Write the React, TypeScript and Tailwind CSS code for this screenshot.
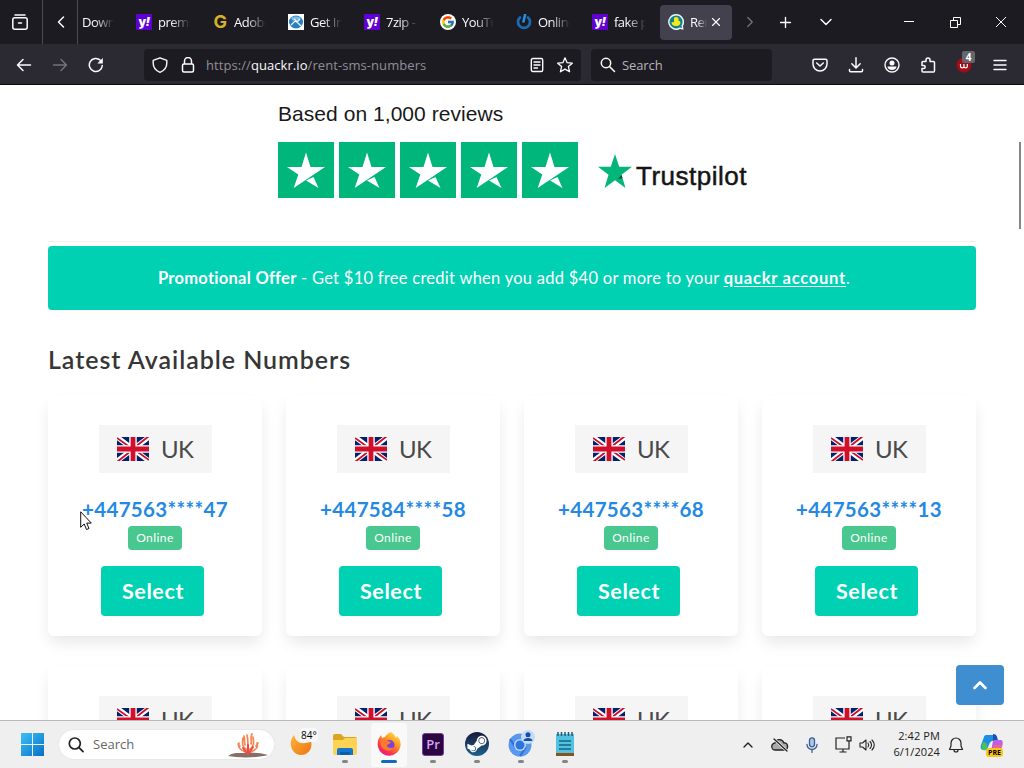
import React from 'react';
import { ChevronDown, ChevronLeft, ChevronRight, ChevronUp, Plus, X } from 'lucide-react';
import { FcGoogle } from 'react-icons/fc';
import { FaSteamSymbol } from 'react-icons/fa';

const YahooIcon = () => (
  <span className="flex h-4 w-4 shrink-0 items-center justify-center bg-[#5f01d1] pb-px font-['Inter'] text-[12px] leading-none font-black tracking-[-0.5px] text-white">
    y<i>!</i>
  </span>
);

const GoldIcon = () => (
  <span className="flex h-4 w-4 shrink-0 items-center justify-center font-['Inter'] text-[18px] leading-none font-bold text-[#d5b02b]">G</span>
);

const InfoIcon = () => (
  <svg className="h-4 w-4 shrink-0" viewBox="0 0 16 16">
    <path fill="#fff" d="M0 0h16v16H0z" />
    <ellipse cx="8" cy="8" rx="7" ry="6.5" fill="#2b7fc0" />
    <path d="M3 4c2-2 8-2 10 0l-2 3-3-2-3 2z" fill="#7fbde6" />
    <path d="M3 11l4-4 3 2 3 3M6 5l3 2M12 5l-3 3" stroke="#e9f6ff" strokeWidth="1.2" fill="none" />
  </svg>
);

const PowerIcon = () => (
  <svg className="h-4 w-4 shrink-0" viewBox="0 0 16 16" fill="none" strokeLinecap="round">
    <path d="M4 3.5a6 6 0 1 0 8 0" stroke="#1a6bb0" strokeWidth="2.8" />
    <path d="M9 1L7.500 7.5" stroke="#2590e0" strokeWidth="2.6" />
  </svg>
);

const QuackrIcon = () => (
  <svg className="h-4 w-4 shrink-0" viewBox="0 0 16 16">
    <path d="M8 0a8 8 0 1 0 4 15l3.5.8L15 12A8 8 0 0 0 8 0z" fill="#e8f6f4" />
    <path d="M8 1.5a6.5 6.5 0 1 0 3.5 12l2.5.5-.5-2.5A6.5 6.5 0 0 0 8 1.5z" fill="#12808f" />
    <path d="M6 4a2.6 2.6 0 0 1 4.500 2.500c3 1 2.500 5-1.500 5.500-4 .3-5.500-1.500-5.500-4l2.500.2z" fill="#f5ea1c" />
  </svg>
);

const TABS = [
  { title: 'premi', icon: <YahooIcon /> },
  { title: 'Adobe', icon: <GoldIcon /> },
  { title: 'Get Info', icon: <InfoIcon /> },
  { title: '7zip - Y', icon: <YahooIcon /> },
  { title: 'YouTube', icon: <span className="flex h-4 w-4 shrink-0 items-center justify-center rounded-full bg-white"><FcGoogle size={14} /></span> },
  { title: 'Online', icon: <PowerIcon /> },
  { title: 'fake p', icon: <YahooIcon /> },
];

const fade = 'overflow-hidden whitespace-nowrap [mask-image:linear-gradient(to_right,#000_40%,transparent)]';

const TabBar = () => (
  <div className="flex h-11 items-center bg-[#1c1b22] text-[13px] tracking-[-0.5px] text-[#fbfbfe]">
    <div className="flex h-11 w-[43px] shrink-0 items-center justify-center border-r border-[#4c4b53] pr-0.5">
      <svg className="h-4 w-4" viewBox="0 0 16 16" fill="none" stroke="#fbfbfe" strokeWidth="1.5" strokeLinecap="round">
        <path d="M3 1h10M6.500 9h3" />
        <rect x=".8" y="3.8" width="14.4" height="11.4" rx="2" />
      </svg>
    </div>
    <div className="flex h-11 w-[35px] shrink-0 items-center justify-center border-r border-[#4c4b53]">
      <ChevronLeft size={20} strokeWidth={1.8} className="ml-0.5" />
    </div>
    <div className="w-[50px] shrink-0 pt-0.5 pl-1">
      <div className={`w-8 ${fade}`}>Downl</div>
    </div>
    {TABS.map((tab) => (
      <div key={tab.title} className="flex w-[76px] shrink-0 items-center gap-1.5 pl-2">
        {tab.icon}
        <span className={`mt-0.5 w-8 ${fade}`}>{tab.title}</span>
      </div>
    ))}
    <div className="flex h-[35px] w-[72px] shrink-0 items-center rounded bg-[#42414d] pl-2">
      <QuackrIcon />
      <span className={`mt-0.5 ml-1.5 w-[17px] ${fade}`}>Ren</span>
      <X size={14} strokeWidth={2} className="ml-0.5" />
    </div>
    <ChevronRight size={18} strokeWidth={1.6} className="ml-[9px] text-[#77767e]" />
    <Plus size={17} strokeWidth={1.9} className="ml-[18px]" />
    <ChevronDown size={20} strokeWidth={1.8} className="ml-[22px]" />
    <svg className="ml-[67px] h-3 w-3" viewBox="0 0 12 12" stroke="#fff"><path d="M1 5.500h10" /></svg>
    <svg className="ml-[34px] h-3 w-3" viewBox="0 0 12 12" fill="none" stroke="#fff">
      <path d="M1.500 4.500h7v7h-7zM4.500 4.500v-3h7v7h-3" />
    </svg>
    <svg className="ml-[34px] h-3 w-3" viewBox="0 0 12 12" stroke="#fff"><path d="M1 1l10 10M11 1L1 11" /></svg>
  </div>
);

const NavBar = () => (
  <div className="flex h-[41px] items-center border-b border-[#0c0c0d] bg-[#2b2a33] pt-px text-[#fbfbfe]">
    <div className="flex w-36 shrink-0 gap-5 pl-4">
      <svg className="h-4 w-4" viewBox="0 0 16 16" fill="none" stroke="currentColor" strokeWidth="1.5" strokeLinecap="round" strokeLinejoin="round">
        <path d="M14.500 8H1.500M7 2.500L1.500 8 7 13.500" />
      </svg>
      <svg className="h-4 w-4 text-[#74737b]" viewBox="0 0 16 16" fill="none" stroke="currentColor" strokeWidth="1.4" strokeLinecap="round" strokeLinejoin="round">
        <path d="M1.500 8h13M9 2.500L14.500 8 9 13.500" />
      </svg>
      <svg className="h-4 w-4" viewBox="0 0 16 16" fill="none" stroke="currentColor" strokeWidth="1.5" strokeLinecap="round">
        <path d="M14.300 8.500a6.500 6.500 0 1 1-2-5.200l1.200 1.200" />
        <path d="M14.800 1v5.500H9.300z" fill="currentColor" stroke="none" />
      </svg>
    </div>
    <div className="flex h-8 w-[437px] shrink-0 items-center rounded bg-[#1c1b22] pl-2">
      <svg className="h-4 w-4" viewBox="0 0 16 16" fill="none" stroke="currentColor" strokeWidth="1.4" strokeLinejoin="round">
        <path d="M8 .8l6.800 2.500v3c0 4-2.500 7.300-6.800 9-4.300-1.700-6.800-5-6.800-9v-3z" />
      </svg>
      <svg className="ml-3 h-4 w-4" viewBox="0 0 16 16" fill="none" stroke="currentColor" strokeWidth="1.5">
        <rect x="2.500" y="7" width="11" height="8" rx="1.500" />
        <path d="M4.500 7V4a3.500 3.500 0 0 1 7 0v3" />
      </svg>
      <span className="mt-0.5 ml-2.5 w-[323px] text-[13px] tracking-[0.07px] text-[#908f96]">
        https://<span className="text-[#fbfbfe]">quackr.io</span>/rent-sms-numbers
      </span>
      <svg className="h-4 w-4" viewBox="0 0 16 16" fill="none" stroke="currentColor" strokeWidth="1.4" strokeLinecap="round">
        <rect x="2.300" y="1.500" width="11.400" height="13" rx="1.500" />
        <path d="M5 5h6M5 8h6M5 11h3.500" />
      </svg>
      <svg className="ml-3 h-4 w-4" viewBox="0 0 16 16" fill="none" stroke="currentColor" strokeWidth="1.3" strokeLinejoin="round">
        <path d="M8 .8l2.100 4.900 5.200.5-3.900 3.400 1.200 5.200L8 12.100l-4.600 2.700 1.200-5.200L.7 6.200l5.200-.5z" />
      </svg>
    </div>
    <div className="ml-2.5 flex h-8 w-[181px] shrink-0 items-center rounded bg-[#1c1b22] pl-[9px] text-[13px]">
      <svg className="h-4 w-4" viewBox="0 0 16 16" fill="none" stroke="currentColor" strokeWidth="1.5" strokeLinecap="round">
        <circle cx="6" cy="6" r="4.700" />
        <path d="M9.500 9.500l5 5" />
      </svg>
      <span className="mt-0.5 ml-1.5 tracking-[-0.1px] text-[#b5b4bb]">Search</span>
    </div>
    <div className="ml-10 flex items-center gap-5">
      <svg className="h-4 w-4" viewBox="0 0 16 16" fill="none" stroke="currentColor" strokeWidth="1.5" strokeLinecap="round" strokeLinejoin="round">
        <path d="M2.500 2.200h11a1.500 1.500 0 0 1 1.500 1.500V7A7 7 0 0 1 1 7V3.700a1.500 1.500 0 0 1 1.500-1.500zM4.700 6L8 9l3.300-3" />
      </svg>
      <svg className="h-4 w-4" viewBox="0 0 16 16" fill="none" stroke="currentColor" strokeWidth="1.5" strokeLinecap="round" strokeLinejoin="round">
        <path d="M8 .8v10M3.800 6.800L8 11l4.200-4.200M1.500 12.500v1.300a1 1 0 0 0 1 1h11a1 1 0 0 0 1-1v-1.300" />
      </svg>
      <svg className="h-4 w-4" viewBox="0 0 16 16" fill="none" stroke="currentColor" strokeWidth="1.4">
        <circle cx="8" cy="8" r="7" />
        <circle cx="8" cy="6" r="2.500" fill="currentColor" stroke="none" />
        <path d="M3.500 9.500h9c0 2-2 3.500-4.500 3.500s-4.500-1.500-4.500-3.500z" fill="currentColor" stroke="none" />
      </svg>
      <svg className="h-4 w-4" viewBox="0 0 16 16" fill="none" stroke="currentColor" strokeWidth="1.5" strokeLinejoin="round">
        <path d="M6 4.500V3a1.800 1.800 0 0 1 4 0v1.500h3.500a1 1 0 0 1 1 1V14a1 1 0 0 1-1 1H3a1 1 0 0 1-1-1v-2.500h1.700a1.500 1.500 0 0 0 0-3H2v-3a1 1 0 0 1 1-1z" />
      </svg>
      <div className="relative h-4 w-4">
        <svg className="h-4 w-4" viewBox="0 0 16 16">
          <circle cx="8" cy="8" r="7.500" fill="#a00d18" />
          <path d="M4.500 7v2.200a1.700 1.700 0 0 0 3.400 0V7v2.200a1.700 1.700 0 0 0 3.400 0V7" fill="none" stroke="#fff" strokeWidth="1.2" />
        </svg>
        <span className="absolute -top-[6px] left-[6px] h-3 w-[13px] rounded-[2px] bg-[#66656b] text-center text-[10px] leading-3 font-bold text-white">4</span>
      </div>
      <svg className="h-4 w-4" viewBox="0 0 16 16" stroke="currentColor" strokeWidth="1.4" strokeLinecap="round">
        <path d="M2 3.500h12M2 8h12M2 12.500h12" />
      </svg>
    </div>
  </div>
);

const RatingStar = () => (
  <svg className="h-14 w-14 bg-[#00b67a]" viewBox="0 0 56 56" fill="#fff">
    <path d="M28 10.500l4.500 14.500H47L15.700 46l4.600-13.500L9 25h14.500z" />
    <path d="M28 38.500l7.500-3.500L40.500 46z" />
  </svg>
);

const Trustpilot = () => (
  <div className="ml-[278px] flex flex-col">
    <div className="flex h-[57px] items-start pt-[15px] font-['Liberation_Sans'] text-[21px] leading-7 tracking-[0.05px] text-[#191919]">
      <span>Based on 1,000 reviews</span>
    </div>
    <div className="flex h-14">
      <div className="flex gap-[5px]">
        {[1, 2, 3, 4, 5].map((n) => <RatingStar key={n} />)}
      </div>
      <svg className="mt-[12px] ml-5 h-[34px] w-[34px]" viewBox="0 0 34 34">
        <path d="M17 0l4.200 12.800H34l-10.500 8L27.500 34 17 26.200 6.500 34l4-13.200L0 12.800h12.800z" fill="#04b57a" />
        <path d="M20 25l4.500-.8-.9-3.200z" fill="#0b5130" />
      </svg>
      <span className="ml-1 pt-[17px] font-['Liberation_Sans'] text-[26px] leading-[34px] tracking-[0.5px] text-[#151515] [-webkit-text-stroke:0.5px_#151515]">Trustpilot</span>
    </div>
  </div>
);

const Flag = () => (
  <svg className="h-6 w-8" viewBox="0 0 32 24">
    <path fill="#012169" d="M0 0h32v24H0z" />
    <path d="M0 0l32 24M32 0L0 24" stroke="#fff" strokeWidth="5" />
    <path d="M0 1l14 10M32 -1L18 10M32 23L18 13M0 25l14-11" stroke="#c8102e" strokeWidth="1.8" />
    <path d="M16 0v24M0 12h32" stroke="#fff" strokeWidth="7.500" />
    <path d="M16 0v24M0 12h32" stroke="#d0102b" strokeWidth="4.800" />
  </svg>
);

const NumberCard = ({ phone }: { phone: string }) => (
  <div className="flex h-60 flex-col items-center rounded-md bg-white pt-[29px] shadow-[0_8px_16px_-2px_rgba(10,10,10,0.1)]">
    <div className="ml-px flex h-12 w-[113px] shrink-0 items-center gap-3 bg-[#f5f5f5] pl-[18px] text-[24px] tracking-[-0.7px] text-[#4a4a4a]">
      <Flag />
      <span>UK</span>
    </div>
    <div className="mt-5 mb-px flex h-8 items-center text-[20.5px] font-bold tracking-[0.3px] whitespace-nowrap text-[#2489e2]">{phone}</div>
    <div className="flex h-6 w-[54px] shrink-0 items-center justify-center rounded bg-[#48c78e] text-[12px] tracking-[0.45px] text-white">Online</div>
    <button className="mt-4 mr-[5px] h-[50px] w-[103px] shrink-0 rounded bg-[#00d1b2] pl-px text-[21.5px] font-bold tracking-[0.6px] text-white">Select</button>
  </div>
);

const PHONES = ['+447563****47', '+447584****58', '+447563****68', '+447563****13'];

const Page = () => (
  <div className="relative h-[635px] overflow-hidden bg-white font-['Lato']">
    <Trustpilot />
    <div className="mx-12 mt-[43px] h-px bg-[#f1f1f1]" />
    <div className="mx-12 mt-1 flex h-16 items-center justify-center rounded bg-[#00d1b2] pr-4 text-[16.5px] tracking-[0.27px] whitespace-pre text-white">
      <b>Promotional Offer</b> - Get $10 free credit when you add $40 or more to your <b className="tracking-[0.75px] underline underline-offset-2">quackr account</b>.
    </div>
    <h2 className="mt-[33px] ml-12 h-8 text-[25px] leading-8 font-semibold tracking-[0.95px] text-[#363636]">Latest Available Numbers</h2>
    <div className="mx-12 mt-[21px] grid grid-cols-4 gap-x-6 gap-y-[31px]">
      {PHONES.concat(PHONES).map((phone, i) => <NumberCard key={i} phone={phone} />)}
    </div>
    <div className="absolute top-[57px] right-[3px] h-[87px] w-[2px] bg-[#85858a]" />
    <button className="absolute top-[580px] left-[956px] flex h-10 w-12 items-center justify-center rounded bg-[#3e8ed0]">
      <svg className="h-4 w-4" viewBox="0 0 16 16" fill="none" stroke="#fff" strokeWidth="2.6" strokeLinecap="round" strokeLinejoin="round"><path d="M2.500 11L8 5.500l5.500 5.500" /></svg>
    </button>
    <svg className="absolute top-[426px] left-[80px] h-5 w-3" viewBox="0 0 12 20">
      <path d="M.7.8v15.500l3.500-3.300 2.300 5.500 2.500-1-2.300-5.400h4.600z" fill="#fff" stroke="#111" />
    </svg>
  </div>
);

const TaskItem = ({ active, children }: { active?: boolean; children: React.ReactNode }) => (
  <div className="flex h-[47px] w-11 shrink-0 flex-col items-center">
    <div className={active ? 'mt-0.5 flex h-11 w-9 flex-col items-center rounded bg-[#f9f9f9]' : 'mt-0.5 flex h-11 w-9 flex-col items-center'}>
      <div className="flex h-[42px] shrink-0 items-center">{children}</div>
    </div>
    <div className={active ? '-mt-[7px] h-[3px] w-4 shrink-0 rounded-full bg-[#0f6cbd]' : '-mt-[7px] h-[3px] w-[6px] shrink-0 rounded-full bg-[#858585]'} />
  </div>
);

const Taskbar = () => (
  <div className="flex h-12 items-center border-t border-[#b9b9b9] bg-[#efefef] text-[#202020]">
    <svg className="ml-[21px] h-[23px] w-[23px] shrink-0" viewBox="0 0 23 23">
      <defs>
        <linearGradient id="win" x1="0" y1="0" x2="1" y2="1">
          <stop offset="0" stopColor="#3fc0f5" />
          <stop offset="1" stopColor="#0670c8" />
        </linearGradient>
      </defs>
      <path fill="url(#win)" d="M0 0h11v11H0zM12 0h11v11H12zM0 12h11v11H0zM12 12h11v11H12z" />
    </svg>
    <div className="ml-3.5 flex h-[31px] w-[217px] shrink-0 items-center rounded-full border border-[#e8e8e8] bg-white pl-[9px]">
      <svg className="h-4 w-4" viewBox="0 0 16 16" fill="none" stroke="#222" strokeWidth="1.7" strokeLinecap="round">
        <circle cx="6.800" cy="6.500" r="5.500" />
        <path d="M11 10.700l4 4" />
      </svg>
      <span className="ml-[9px] w-[134px] text-[13px] text-[#666]">Search</span>
      <svg className="h-[26px] w-[42px]" viewBox="0 0 42 26" fill="none" strokeLinecap="round">
        <path d="M1 24c5-4 11-3 17-3s13-1 23 2c-10 3-30 3-40 1z" fill="#876f65" />
        <path d="M21 22C20 15 22 10 20 3M20 18c-5-3-5-6-4-12M22 18c5-3 5-7 4-13M18 20c-6-3-7-5-6-9M24 20c6-3 7-5 6-9M18 13c-1-3 0-6-1-9M24 12c1-4-1-6 1-10M13 14l-2-2M29 14l2-3" stroke="#f58453" strokeWidth="1.700" />
        <path d="M21 22v-9M20 21l-4-5M22 21l4-6" stroke="#ed4a43" strokeWidth="2" />
      </svg>
    </div>
    <div className="relative ml-[15px] h-6 w-7 shrink-0">
      <svg className="h-6 w-6" viewBox="0 0 24 24">
        <defs>
          <linearGradient id="moon" x1="0" y1="0" x2="1" y2="1">
            <stop offset="0" stopColor="#fdb53d" />
            <stop offset="1" stopColor="#ee7310" />
          </linearGradient>
        </defs>
        <path d="M4 2c1 6 6 9 11 8 3 0 5-1 6-2 2 8-3 14-10 14C2 22-3 10 4 2z" fill="url(#moon)" />
      </svg>
      <span className="absolute -top-[5px] left-2.5 rounded bg-[#f7f7f7] px-px text-[10px] leading-[14px] text-black">84°</span>
    </div>
    <div className="ml-[5px] flex shrink-0">
      <TaskItem>
        <svg className="h-[23px] w-[26px]" viewBox="0 0 26 23">
          <path d="M1 3a2 2 0 0 1 2-2h6l3 3h11a2 2 0 0 1 2 2v3H1z" fill="#dca521" />
          <path d="M1 7h10l2-2h12v15a2 2 0 0 1-2 2H3a2 2 0 0 1-2-2z" fill="#fcd353" />
          <path d="M5 22v-5a2 2 0 0 1 2-2h12a2 2 0 0 1 2 2v5z" fill="#1476ce" />
          <path d="M8 19h10v3H8z" fill="#0b5da8" />
        </svg>
      </TaskItem>
      <TaskItem active>
        <svg className="h-6 w-6" viewBox="0 0 24 24">
          <defs>
            <linearGradient id="fox" x1="0.9" y1="0" x2="0.2" y2="1">
              <stop offset="0" stopColor="#fff04b" />
              <stop offset="0.4" stopColor="#ff9823" />
              <stop offset="0.75" stopColor="#fb3452" />
              <stop offset="1" stopColor="#e31587" />
            </linearGradient>
          </defs>
          <path d="M14 0c3 2 4 4 5 6l1-2c3 3 4 6 3.500 10A11.500 11.500 0 0 1 1 15C0 10 1 7 4 3l1 3 3-1c1-2 3-4 6-5z" fill="url(#fox)" />
          <circle cx="12.500" cy="13" r="5" fill="#7a43d8" />
          <path d="M3 9c3-3 6-2 8 0l3 1c-1 2-3 2-4 3 0 3 4 4 7 2-2 5-10 5-13-1z" fill="#fc7a2a" />
        </svg>
      </TaskItem>
      <TaskItem>
        <div className="flex h-[23px] w-[22px] items-center justify-center rounded-[3px] border border-[#6e3d94] bg-[#2c0640] font-['Open_Sans'] text-[13px] leading-none font-semibold text-[#d9a5ff]">Pr</div>
      </TaskItem>
      <TaskItem>
        <span className="flex h-6 w-6 items-center justify-center rounded-full bg-gradient-to-b from-[#171a3a] to-[#17618f]">
          <FaSteamSymbol size={22} color="#fff" />
        </span>
      </TaskItem>
      <TaskItem>
        <svg className="h-7 w-7" viewBox="0 0 28 28">
          <circle cx="13" cy="15" r="11.500" fill="#5798f0" />
          <path d="M3 9l6 9M13 26l6-9" stroke="#2f6fd6" strokeWidth="2" />
          <circle cx="13" cy="15" r="6" fill="#b9d5fa" />
          <circle cx="13" cy="15" r="4.500" fill="#2f74dc" />
          <circle cx="21" cy="7" r="7" fill="#c3dcf7" />
          <circle cx="21" cy="4.800" r="2.500" fill="#174ea6" />
          <path d="M16.500 11c0-4 9-4 9 0z" fill="#174ea6" />
        </svg>
      </TaskItem>
      <TaskItem>
        <svg className="h-[26px] w-5" viewBox="0 0 20 26">
          <path d="M1 3h18v19H1z" fill="#53c1e2" />
          <path d="M1 22h18v3H1z" fill="#8a5317" />
          <path d="M4 10h12M4 14h12M4 18h12" stroke="#176580" strokeWidth="1.5" />
          <path d="M3 1v4M6.500 1v4M10 1v4M13.500 1v4M17 1v4" stroke="#245a70" strokeWidth="1.5" />
        </svg>
      </TaskItem>
    </div>
    <div className="ml-[153px] flex shrink-0 items-center">
      <ChevronUp size={16} strokeWidth={2} />
      <svg className="ml-[15px] h-4 w-[18px]" viewBox="0 0 18 16" fill="none" stroke="#222" strokeWidth="1.3" strokeLinecap="round">
        <path d="M4.500 13A3.500 3.500 0 0 1 4 6c1-4 7-5 9 0 4-.5 5 6 1 7z" fill="#aaa" />
        <path d="M3 2l13 12" stroke="#efefef" strokeWidth="3" />
        <path d="M3 2l13 12" />
      </svg>
      <svg className="ml-[15px] h-4 w-4" viewBox="0 0 16 16" fill="none" stroke="#3c5d92" strokeWidth="1.3" strokeLinecap="round">
        <rect x="5.500" y=".8" width="5" height="9" rx="2.500" fill="#a9c8ee" />
        <path d="M3 7.500a5 5 0 0 0 10 0M8 12.500v3" />
      </svg>
      <svg className="ml-[15px] h-[17px] w-[17px]" viewBox="0 0 17 17" fill="none" stroke="#222" strokeWidth="1.2">
        <path d="M10 2H1v11h13V8M8 13v3M4.500 16h7M12 .8h4v4h-4zM14 5v4" />
      </svg>
      <svg className="ml-[7px] h-4 w-4" viewBox="0 0 16 16" fill="none" stroke="#222" strokeWidth="1.1" strokeLinecap="round" strokeLinejoin="round">
        <path d="M1 6v4h2.500L7 13V3L3.500 6zM9 6c1 1.300 1 2.700 0 4M11 4.500c2 2 2 5 0 7M13 3c3 3 3 7 0 10" />
      </svg>
    </div>
    <div className="mb-0.5 ml-2 w-[57px] shrink-0 text-right text-[11px] leading-4 tracking-[0.1px] whitespace-nowrap">
      <div>2:42 PM</div>
      <div>6/1/2024</div>
    </div>
    <svg className="ml-2 h-4 w-4 shrink-0" viewBox="0 0 16 16" fill="none" stroke="#222" strokeWidth="1.2" strokeLinejoin="round">
      <path d="M8 1a5 5 0 0 0-5 5v3l-1.500 3.500h13L13 9V6a5 5 0 0 0-5-5zM6 13a2 2 0 0 0 4 0" />
    </svg>
    <div className="relative ml-4 h-6 w-6 shrink-0">
      <svg className="h-6 w-6" viewBox="0 0 24 24">
        <path d="M6 2h8c3 0 3 3 4 6h-6c-3 0-4 9-6 9-5 0-6-1-5-5L4 4c0-1 1-2 2-2z" fill="#1b8fe0" />
        <path d="M13 1c4 0 4 3 5 7h-5z" fill="#1851b8" />
        <path d="M3 9c3 0 5 2 4 8-5 1-6-1-5-5z" fill="#4bbd62" />
        <path d="M14 7h6c3 0 3 2 2.500 5l-2 6c-1 3-3 4-6 4H9c3-1 3-15 5-15z" fill="#bb61e3" />
        <path d="M14 12h8l-2 6h-8z" fill="#f0658d" />
      </svg>
      <span className="absolute top-[15px] left-[6px] rounded-[3px] bg-[#fcc51e] px-[2px] text-[7px] leading-[9px] font-bold text-black">PRE</span>
    </div>
  </div>
);

const App: React.FC = () => {
  return (
    <div className="h-[768px] w-[1024px] overflow-hidden font-['Open_Sans',sans-serif]">
      <TabBar />
      <NavBar />
      <Page />
      <Taskbar />
    </div>
  );
};

export default App;
